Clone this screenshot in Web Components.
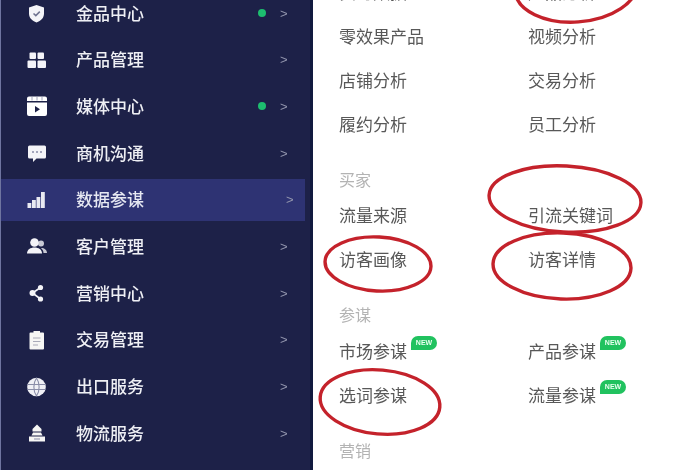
<!DOCTYPE html>
<html lang="zh">
<head>
<meta charset="utf-8">
<title>数据参谋</title>
<style>
html, body { margin: 0; height: 100%; overflow: hidden; background: #fff; }
body { font-family: "Noto Sans CJK SC", "Liberation Sans", sans-serif; }
</style>
</head>
<body>
<app-shell>
    <side-nav slot="nav">
        <nav-item icon="shield" dot>金品中心</nav-item>
        <nav-item icon="grid">产品管理</nav-item>
        <nav-item icon="media" dot>媒体中心</nav-item>
        <nav-item icon="chat">商机沟通</nav-item>
        <nav-item icon="bars" active>数据参谋</nav-item>
        <nav-item icon="users">客户管理</nav-item>
        <nav-item icon="share">营销中心</nav-item>
        <nav-item icon="clipboard">交易管理</nav-item>
        <nav-item icon="globe">出口服务</nav-item>
        <nav-item icon="truck">物流服务</nav-item>
    </side-nav>
    <menu-panel slot="panel">
        <menu-group>
            <menu-link>实时数据</menu-link>
            <menu-link>产品分析</menu-link>
            <menu-link>零效果产品</menu-link>
            <menu-link>视频分析</menu-link>
            <menu-link>店铺分析</menu-link>
            <menu-link>交易分析</menu-link>
            <menu-link>履约分析</menu-link>
            <menu-link>员工分析</menu-link>
        </menu-group>
        <menu-group heading="买家">
            <menu-link>流量来源</menu-link>
            <menu-link>引流关键词</menu-link>
            <menu-link>访客画像</menu-link>
            <menu-link>访客详情</menu-link>
        </menu-group>
        <menu-group heading="参谋">
            <menu-link new>市场参谋</menu-link>
            <menu-link new>产品参谋</menu-link>
            <menu-link>选词参谋</menu-link>
            <menu-link new>流量参谋</menu-link>
        </menu-group>
        <menu-group heading="营销"></menu-group>
    </menu-panel>
</app-shell>

<script>
const NAV_ICONS = {
    shield: `<path fill="#f4f4f8" d="M10.500 3 18 5.500V11.500C18 16 15 18.800 10.500 20.500 6 18.800 3 16 3 11.500V5.500Z"/><path fill="none" stroke="#6f7390" stroke-width="1.500" d="M7.500 11.500 9.800 13.600 13.800 9.600"/>`,
    grid: `<g fill="#f4f4f8"><rect x="3.500" y="3.500" width="6.500" height="6.500" rx="1"/><rect x="11.500" y="3.500" width="6.500" height="6.500" rx="1"/><rect x="1.500" y="11.500" width="8.500" height="7.500" rx="1"/><rect x="11.500" y="11.500" width="8.500" height="7.500" rx="1"/></g>`,
    media: `<path fill="#fff" d="M1 3.500A2 2 0 0 1 3 1.500H19A2 2 0 0 1 21 3.500V6H1ZM1 7.500H21V19A2 2 0 0 1 19 21H3A2 2 0 0 1 1 19Z"/><path fill="#1d2148" d="M9 11 14 14.200 9 17.400Z"/><path stroke="#8a8da8" stroke-width=".8" d="M6 2V5.500M11 2V5.500M16 2V5.500"/>`,
    chat: `<path fill="#f4f4f8" d="M3.500 3.500H18.500A1.500 1.500 0 0 1 20 5V15A1.500 1.500 0 0 1 18.500 16.500H10.500L7 20V16.500H3.500A1.500 1.500 0 0 1 2 15V5A1.500 1.500 0 0 1 3.500 3.500Z"/><circle fill="#8a8da8" cx="7" cy="10" r="1"/><circle fill="#8a8da8" cx="11" cy="10" r="1"/><circle fill="#8a8da8" cx="15" cy="10" r="1"/>`,
    bars: `<g fill="#e9eaf2"><rect x="1.500" y="14" width="3.800" height="5"/><rect x="6" y="11" width="3.800" height="8"/><rect x="10.500" y="8" width="3.800" height="11"/><rect x="15" y="3" width="3.800" height="16"/></g>`,
    users: `<g fill="#f4f4f8"><circle cx="8.500" cy="7.500" r="4.300"/><path d="M1 18.500C1 14.500 4.500 12.500 8.500 12.500S16 14.500 16 18.500Z"/><circle cx="15" cy="8.500" r="3" opacity=".8"/><path d="M15 13C18.500 13 21 15 21 18H17.500C17.500 16 16.500 14.500 15 13Z" opacity=".8"/></g>`,
    share: `<g fill="#f4f4f8"><circle cx="14.500" cy="5.500" r="2.600"/><circle cx="6.500" cy="11" r="3"/><circle cx="14.500" cy="17" r="2.600"/></g><path fill="none" stroke="#f4f4f8" stroke-width="1.600" d="M14.500 5.500 6.500 11 14.500 17"/>`,
    clipboard: `<path fill="#f6f6f4" d="M4.500 3.500H7.500V2H14V3.500H17A1 1 0 0 1 18 4.500V19.500A1 1 0 0 1 17 20.500H4.500A1 1 0 0 1 3.500 19.500V4.500A1 1 0 0 1 4.500 3.500Z"/><path stroke="#a9aab8" stroke-width="1.100" d="M7 9H14.500M7 12.500H14.500M7 16H12"/>`,
    globe: `<circle fill="#f0f0f5" cx="10.500" cy="11" r="9.300"/><path fill="none" stroke="#8a8da8" stroke-width="1.100" d="M1.500 8.500H19.500M1.500 13.500H19.500M10.500 2C7 7 7 15 10.500 20M10.500 2C14 7 14 15 10.500 20"/>`,
    truck: `<g fill="#f6f6f4"><path d="M11 2.500 15.500 7V9.500H6.500V7Z"/><path d="M7 10.500H15L16.500 13.500H5.500Z"/><rect x="3" y="14.500" width="16" height="5"/></g><path stroke="#8a8da8" stroke-width="1" d="M8 17H14"/>`
};

class AppShell extends HTMLElement {
    constructor() {
        super();
        this.attachShadow({ mode: "open" });
        this.shadowRoot.innerHTML = `
<style>
:host { display: flex; width: 700px; height: 470px; overflow: hidden; filter: blur(.7px); }
</style>
<slot name="nav"></slot>
<slot name="panel"></slot>
`;
    }
}

class SideNav extends HTMLElement {
    constructor() {
        super();
        this.attachShadow({ mode: "open" });
        this.shadowRoot.innerHTML = `
<style>
:host {
    display: flex;
    flex-direction: column;
    flex: 0 0 313px;
    box-sizing: border-box;
    height: 470px;
    overflow: hidden;
    background: #1d2148;
    border-left: 1px solid #6f75a0;
    border-right: 3px solid #121a3f;
}
.list { display: flex; flex-direction: column; gap: 4.7px; margin-top: -8px; }
</style>
<div class="list"><slot></slot></div>
`;
    }
}

class NavItem extends HTMLElement {
    constructor() {
        super();
        this.attachShadow({ mode: "open" });
        this.shadowRoot.innerHTML = `
<style>
:host {
    display: flex;
    align-items: center;
    box-sizing: border-box;
    height: 42px;
    flex: none;
    padding-left: 25px;
    color: #eeeff4;
    font-size: 17px;
    font-weight: 500;
    line-height: 1;
}
:host([active]) { background: #2e3373; width: 304px; color: #e6e8f2; }
svg { flex: none; width: 22px; height: 22px; }
.label { flex: 1; margin-left: 28px; padding-bottom: 2px; }
.dot { width: 8px; height: 8px; border-radius: 50%; background: #1dbd6f; margin-right: 14px; display: none; }
:host([dot]) .dot { display: block; }
.arrow { width: 8px; margin-right: 22px; color: #9295ad; font-size: 13px; font-family: "Liberation Sans", sans-serif; }
:host([active]) .arrow { margin-right: 11px; }
</style>
<svg viewBox="0 0 22 22"></svg>
<span class="label"><slot></slot></span>
<span class="dot"></span>
<span class="arrow">&gt;</span>
`;
    }

    connectedCallback() {
        this.shadowRoot.querySelector("svg").innerHTML = NAV_ICONS[this.getAttribute("icon")] || "";
    }
}

class MenuPanel extends HTMLElement {
    constructor() {
        super();
        this.attachShadow({ mode: "open" });
        this.shadowRoot.innerHTML = `
<style>
:host {
    display: block;
    position: relative;
    flex: 1;
    height: 470px;
    overflow: hidden;
    background: #fff;
}
.groups {
    display: flex;
    flex-direction: column;
    gap: 19.5px;
    margin-top: -31px;
    padding-left: 26px;
}
/* hand drawn rings over the menu, in page coordinates minus the sidebar */
.rings { position: absolute; left: -313px; top: 0; width: 700px; height: 470px; pointer-events: none; }
ellipse { fill: none; stroke: #c4222b; stroke-width: 3.4; }
</style>
<div class="groups"><slot></slot></div>
<svg class="rings" viewBox="0 0 700 470">
    <ellipse cx="576" cy="-13" rx="61" ry="35" transform="rotate(-4 576 -13)"/>
    <ellipse cx="565" cy="199" rx="76" ry="33" transform="rotate(3 565 199)"/>
    <ellipse cx="378" cy="264" rx="53" ry="27" transform="rotate(3 378 264)"/>
    <ellipse cx="562" cy="266" rx="69" ry="33" transform="rotate(2 562 266)"/>
    <ellipse cx="380" cy="402" rx="60" ry="32" transform="rotate(5 380 402)"/>
</svg>
`;
    }
}

class MenuGroup extends HTMLElement {
    constructor() {
        super();
        this.attachShadow({ mode: "open" });
        this.shadowRoot.innerHTML = `
<style>
:host { display: block; }
.heading { height: 28px; line-height: 28px; color: #b3b3b3; font-size: 16px; }
.heading:empty { display: none; }
.items { display: grid; grid-template-columns: 189px 1fr; grid-auto-rows: 44px; }
</style>
<div class="heading"></div>
<div class="items"><slot></slot></div>
`;
    }

    connectedCallback() {
        this.shadowRoot.querySelector(".heading").textContent = this.getAttribute("heading") || "";
    }
}

class MenuLink extends HTMLElement {
    constructor() {
        super();
        this.attachShadow({ mode: "open" });
        this.shadowRoot.innerHTML = `
<style>
:host { display: flex; align-items: center; color: #585858; font-size: 17px; line-height: 1; }
.text { position: relative; }
.badge {
    display: none;
    position: absolute;
    left: 72px;
    top: -6px;
    width: 26px;
    height: 14px;
    border-radius: 7px 7px 7px 0;
    background: #21c25f;
    color: #e9fff0;
    font: bold 7px/14px "Liberation Sans", sans-serif;
    text-align: center;
}
:host([new]) .badge { display: block; }
</style>
<span class="text"><slot></slot><span class="badge">NEW</span></span>
`;
    }
}

customElements.define("app-shell", AppShell);
customElements.define("side-nav", SideNav);
customElements.define("nav-item", NavItem);
customElements.define("menu-panel", MenuPanel);
customElements.define("menu-group", MenuGroup);
customElements.define("menu-link", MenuLink);
</script>
</body>
</html>
